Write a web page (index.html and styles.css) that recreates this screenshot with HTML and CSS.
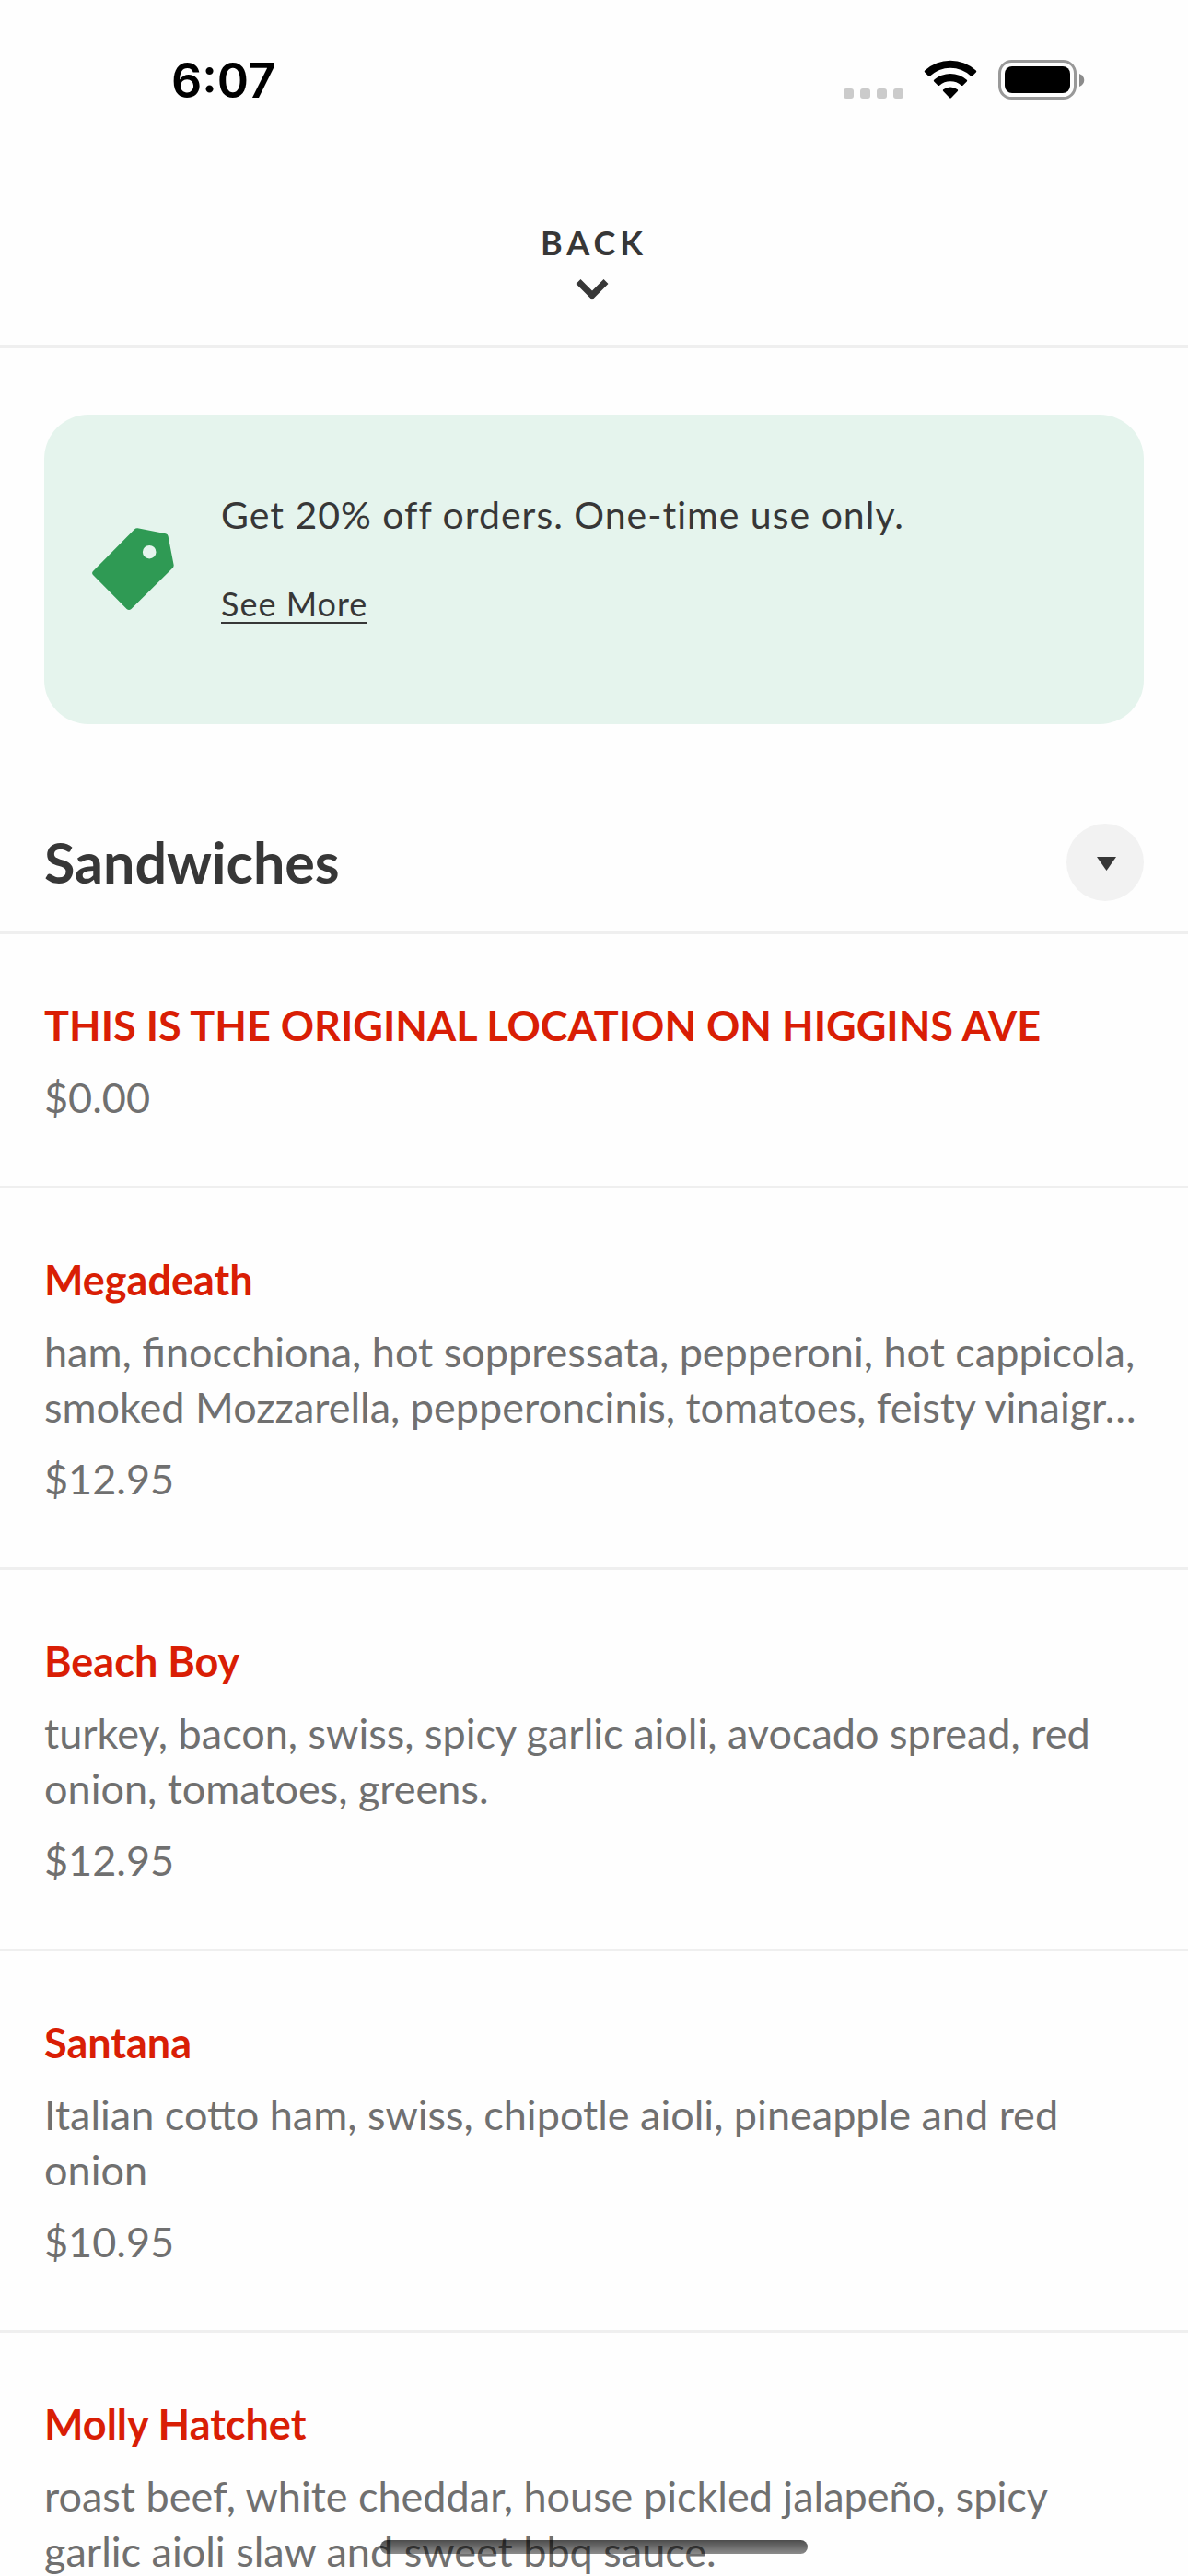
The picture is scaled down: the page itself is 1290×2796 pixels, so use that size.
FILE: index.html
```
<!DOCTYPE html>
<html lang="en">
<head>
  <meta charset="UTF-8">
  <meta name="viewport" content="width=device-width, initial-scale=1.0">
  <title>Sandwiches</title>
  <link rel="stylesheet" href="styles.css">
</head>
<body>
  <div class="status-bar">
    <span class="time">6:07</span>
    <div class="status-icons">
      <svg class="signal" width="66" height="42" viewBox="0 0 66 42" fill="#cbcbcb" aria-hidden="true">
        <rect x="0" y="31" width="11" height="11" rx="3"/>
        <rect x="18" y="31" width="11" height="11" rx="3"/>
        <rect x="36" y="31" width="11" height="11" rx="3"/>
        <rect x="54" y="31" width="11" height="11" rx="3"/>
      </svg>
      <svg class="wifi" width="58" height="42" viewBox="0 0 58 42" aria-hidden="true">
        <path d="M1.2 11.6a41 41 0 0 1 55.6 0q.9.9 0 1.8l-4 4q-.8.8-1.7 0a32.5 32.5 0 0 0-44.2 0q-.9.8-1.7 0l-4-4q-.9-.9 0-1.8z"/>
        <path d="M11.2 21.8a26.5 26.5 0 0 1 35.6 0q.8.8 0 1.6l-4.3 4.3q-.8.7-1.6 0a18 18 0 0 0-23.8 0q-.8.7-1.6 0l-4.3-4.3q-.8-.8 0-1.6z"/>
        <path d="M21.2 32.3a12.5 12.5 0 0 1 15.6 0q.9.8 0 1.7l-7 7.2q-.8.8-1.6 0l-7-7.2q-.9-.9 0-1.700z"/>
      </svg>
      <svg class="battery" width="94" height="44" viewBox="0 0 94 44" aria-hidden="true">
        <rect x="1.5" y="1.5" width="82" height="40" rx="13" fill="none" stroke="#999" stroke-width="3"/>
        <rect x="7" y="7" width="71" height="29" rx="8"/>
        <path d="M88 15c7 2.5 7 11.500 0 14z" fill="#8c8c8c"/>
      </svg>
    </div>
  </div>

  <header class="header">
    <button class="back" type="button">
      BACK
      <svg width="36" height="24" viewBox="0 0 36 24" aria-hidden="true">
        <path d="M3 3.500L18 18.500L33 3.500" fill="none" stroke="#373737" stroke-width="7"/>
      </svg>
    </button>
  </header>

  <main class="content">
    <section class="banner">
      <svg class="tag" width="89" height="90" viewBox="0 0 89 90" aria-hidden="true">
        <path fill="#2f9a54" fill-rule="evenodd" d="M49.500.3L80 6.200Q82.300 6.800 82.600 9L88.600 40Q88.900 42 87.500 43.500L42.500 88Q40 90 37.600 88L1 51Q-.8 49 1 47L46 1.600Q47.500 0 49.500.3zM62.200 19a7.300 7.200 0 1 0 0 14.400a7.300 7.200 0 1 0 0-14.400z"/>
      </svg>
      <div class="banner-text">
        <p>Get 20% off orders. One-time use only.</p>
        <a href="#offer">See More</a>
      </div>
    </section>

    <div class="category">
      <h1>Sandwiches</h1>
      <button class="toggle" type="button" aria-label="Toggle category">
        <svg width="24" height="20" viewBox="0 0 24 20" aria-hidden="true">
          <path d="M3 4H24L13.500 19z" fill="#373737"/>
        </svg>
      </button>
    </div>

    <ul class="menu">
      <li>
        <h2>THIS IS THE ORIGINAL LOCATION ON HIGGINS AVE</h2>
        <p>$0.00</p>
      </li>
      <li>
        <h2>Megadeath</h2>
        <p>ham, finocchiona, hot soppressata, pepperoni, hot cappicola, smoked Mozzarella, pepperoncinis, tomatoes, feisty vinaigr…</p>
        <p>$12.95</p>
      </li>
      <li>
        <h2>Beach Boy</h2>
        <p>turkey, bacon, swiss, spicy garlic aioli, avocado spread, red onion, tomatoes, greens.</p>
        <p>$12.95</p>
      </li>
      <li>
        <h2>Santana</h2>
        <p>Italian cotto ham, swiss, chipotle aioli, pineapple and red onion</p>
        <p>$10.95</p>
      </li>
      <li>
        <h2>Molly Hatchet</h2>
        <p>roast beef, white cheddar, house pickled jalapeño, spicy garlic aioli slaw and sweet bbq sauce.</p>
      </li>
    </ul>
  </main>

  <div class="home-indicator"></div>
</body>
</html>
```

FILE: styles.css
```
* {
  box-sizing: border-box;
}
body {
  margin: 0;
  height: 100vh;
  overflow: hidden;
  display: flex;
  flex-direction: column;
  background-color: #fefefe;
  color: #373737;
  font-family: Lato, sans-serif;
}
h1, h2, p, ul {
  margin: 0;
  padding: 0;
}
button {
  border: none;
  color: inherit;
  font-family: inherit;
  cursor: pointer;
}

/* Status bar */
.status-bar {
  display: flex;
  flex-shrink: 0;
  justify-content: space-between;
  height: 176px;
  padding: 56px 112px 0 186px;
  color: #000;
}
.time {
  font-family: Inter, sans-serif;
  font-size: 52px;
  font-weight: 600;
  line-height: 64px;
}
.status-icons {
  display: flex;
  align-items: flex-start;
  padding-top: 9px;
}
.wifi {
  margin-left: 21px;
}
.battery {
  margin-left: 23px;
}

/* Header */
.header {
  display: flex;
  flex-shrink: 0;
  justify-content: center;
  height: 202px;
  padding-top: 63px;
  border-bottom: 3px solid #efefef;
}
.back {
  display: flex;
  flex-direction: column;
  align-items: center;
  align-self: flex-start;
  gap: 15px;
  padding: 0;
  background: none;
  font-size: 36px;
  font-weight: 700;
  line-height: 48px;
  letter-spacing: 5px;
}
.back svg {
  margin-right: 4px;
}

.content {
  flex: 1;
  min-height: 0;
  overflow: hidden;
}

/* Offer banner */
.banner {
  display: flex;
  align-items: center;
  gap: 51px;
  height: 336px;
  margin: 72px 48px 0;
  padding: 0 52px;
  border-radius: 48px;
  background-color: #e5f4ed;
}
.banner-text {
  display: flex;
  flex-direction: column;
  align-items: flex-start;
  gap: 49px;
  padding-bottom: 28px;
  letter-spacing: 1px;
}
.banner-text p {
  font-size: 41px;
  line-height: 54px;
}
.banner-text a {
  border-bottom: 2px solid #373737;
  color: inherit;
  font-size: 36px;
  line-height: 40px;
  text-decoration: none;
}

/* Category heading */
.category {
  display: flex;
  justify-content: space-between;
  align-items: flex-start;
  height: 228px;
  padding: 108px 48px 0;
  border-bottom: 3px solid #efefef;
}
.category h1 {
  font-size: 61px;
  font-weight: 700;
  line-height: 84px;
}
.toggle {
  display: flex;
  justify-content: center;
  align-items: center;
  width: 84px;
  height: 84px;
  padding: 0;
  border-radius: 50%;
  background-color: #f2f2f2;
}

/* Menu items */
.menu {
  list-style-type: none;
}
.menu li {
  display: flex;
  flex-direction: column;
  gap: 18px;
  padding: 69px 48px 66px;
  border-bottom: 3px solid #efefef;
  color: #707070;
  font-size: 45px;
  line-height: 60px;
}
.menu h2 {
  color: #d91e05;
  font-size: 45px;
  font-weight: 700;
}

.home-indicator {
  position: fixed;
  bottom: 24px;
  left: 32%;
  right: 32%;
  height: 15px;
  border-radius: 8px;
  background: linear-gradient(rgba(0, 0, 0, 0.7), rgba(0, 0, 0, 0.45));
}
```
